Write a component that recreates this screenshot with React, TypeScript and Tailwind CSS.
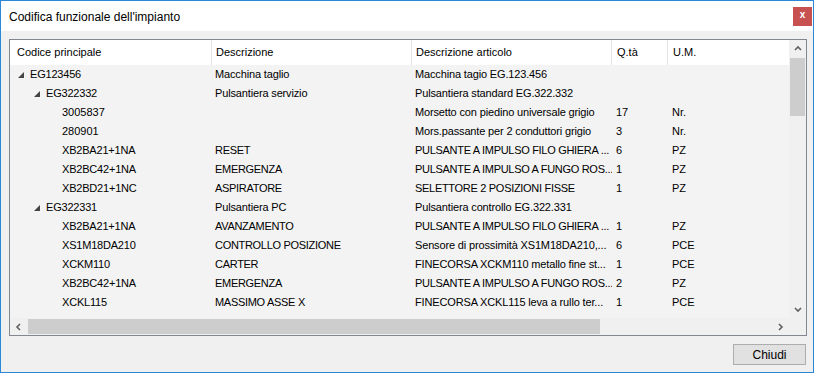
import React from "react";

type Row = {
  level: number;
  expanded?: boolean;
  code: string;
  desc: string;
  article: string;
  qty: string;
  um: string;
};

const rows: Row[] = [
  { level: 0, expanded: true, code: "EG123456", desc: "Macchina taglio", article: "Macchina tagio EG.123.456", qty: "", um: "" },
  { level: 1, expanded: true, code: "EG322332", desc: "Pulsantiera servizio", article: "Pulsantiera standard EG.322.332", qty: "", um: "" },
  { level: 2, code: "3005837", desc: "", article: "Morsetto con piedino universale grigio", qty: "17", um: "Nr." },
  { level: 2, code: "280901", desc: "", article: "Mors.passante per 2 conduttori grigio", qty: "3", um: "Nr." },
  { level: 2, code: "XB2BA21+1NA", desc: "RESET", article: "PULSANTE A IMPULSO FILO GHIERA ...", qty: "6", um: "PZ" },
  { level: 2, code: "XB2BC42+1NA", desc: "EMERGENZA", article: "PULSANTE A IMPULSO A FUNGO ROS...", qty: "1", um: "PZ" },
  { level: 2, code: "XB2BD21+1NC", desc: "ASPIRATORE", article: "SELETTORE 2 POSIZIONI FISSE", qty: "1", um: "PZ" },
  { level: 1, expanded: true, code: "EG322331", desc: "Pulsantiera PC", article: "Pulsantiera controllo EG.322.331", qty: "", um: "" },
  { level: 2, code: "XB2BA21+1NA", desc: "AVANZAMENTO", article: "PULSANTE A IMPULSO FILO GHIERA ...", qty: "1", um: "PZ" },
  { level: 2, code: "XS1M18DA210", desc: "CONTROLLO POSIZIONE", article: "Sensore di prossimità XS1M18DA210,...", qty: "6", um: "PCE" },
  { level: 2, code: "XCKM110", desc: "CARTER", article: "FINECORSA XCKM110 metallo fine st...", qty: "1", um: "PCE" },
  { level: 2, code: "XB2BC42+1NA", desc: "EMERGENZA", article: "PULSANTE A IMPULSO A FUNGO ROS...", qty: "2", um: "PZ" },
  { level: 2, code: "XCKL115", desc: "MASSIMO ASSE X", article: "FINECORSA XCKL115 leva a rullo ter...", qty: "1", um: "PCE" },
  { level: 2, code: "", desc: "", article: "", qty: "", um: "" },
];

const indent = ["pl-[8px]", "pl-[24px]", "pl-[52px]"];

// Arial caps run wider than the original Tahoma: tighten mostly-uppercase strings
const isCaps = (s: string) => {
  const letters = s.replace(/[^A-Za-z]/g, "");
  if (!letters) return false;
  const up = letters.replace(/[^A-Z]/g, "").length;
  return up / letters.length > 0.6;
};

const Cell = ({ text, className }: { text: string; className: string }) => (
  <div className={`${className} overflow-hidden ${isCaps(text) ? "tracking-[-0.3px]" : "tracking-[-0.15px]"}`}>
    {text}
  </div>
);

const Expander = () => (
  <svg width="6" height="6" viewBox="0 0 6 6" className="mr-[6px] shrink-0">
    <polygon points="6,0 6,6 0,6" fill="#444" />
  </svg>
);

const Chevron = ({ dir }: { dir: "up" | "down" | "left" | "right" }) => {
  const pts = {
    up: "1,5 4,2 7,5",
    down: "1,2 4,5 7,2",
    left: "5,1 2,4 5,7",
    right: "2,1 5,4 2,7",
  }[dir];
  return (
    <svg width="8" height="8" viewBox="0 0 8 8">
      <polyline points={pts} fill="none" stroke="#606060" strokeWidth="1.6" />
    </svg>
  );
};

export default function App() {
  return (
    <div className="w-[814px] h-[373px] border border-[#2b88d8] bg-[#f0f0f0] flex flex-col font-['Liberation_Sans',Arial,sans-serif] text-black">
      {/* Title bar */}
      <div className="h-[30px] bg-white flex items-center justify-between pl-2 pr-[1px]">
        <span className="text-[12px] pt-[1px]">Codifica funzionale dell'impianto</span>
        <div className="w-[19px] h-[19px] bg-[#c75050] flex items-center justify-center text-white text-[10px] font-bold leading-none pb-[2px]">
          x
        </div>
      </div>

      {/* Content */}
      <div className="flex-1 flex flex-col pl-2 pr-[6px] pt-2">
        <div className="h-[297px] border border-[#828790] grid grid-cols-[1fr_17px] grid-rows-[1fr_17px] text-[11px]">
          {/* Table */}
          <div className="overflow-hidden bg-[#f3f3f3] flex flex-col">
            <div className="h-[25px] bg-white flex items-stretch shrink-0">
              <div className="w-[202px] border-r border-[#e5e5e5] pl-[7px] flex items-center">Codice principale</div>
              <div className="w-[200px] border-r border-[#e5e5e5] pl-[4px] flex items-center">Descrizione</div>
              <div className="w-[200px] border-r border-[#e5e5e5] pl-[4px] flex items-center">Descrizione articolo</div>
              <div className="w-[56px] border-r border-[#e5e5e5] pl-[5px] flex items-center">Q.tà</div>
              <div className="w-[120px] pl-[5px] flex items-center">U.M.</div>
            </div>
            {rows.map((r, i) => (
              <div key={i} className="h-[19px] flex items-center shrink-0 whitespace-nowrap">
                <div className={`w-[202px] flex items-center ${indent[r.level]}`}>
                  {r.expanded && <Expander />}
                  <span className={isCaps(r.code) ? "tracking-[-0.2px]" : ""}>{r.code}</span>
                </div>
                <Cell text={r.desc} className="w-[200px] pl-[3px]" />
                <Cell text={r.article} className="w-[200px] pl-[3px]" />
                <div className="w-[56px] pl-[4px]">{r.qty}</div>
                <div className="w-[120px] pl-[4px]">{r.um}</div>
              </div>
            ))}
          </div>

          {/* Vertical scrollbar */}
          <div className="bg-[#f0f0f0] flex flex-col items-center">
            <div className="h-[17px] w-full flex items-center justify-center">
              <Chevron dir="up" />
            </div>
            <div className="mt-[1px] w-[15px] h-[58px] bg-[#cdcdcd]" />
            <div className="flex-1" />
            <div className="h-[17px] w-full flex items-center justify-center">
              <Chevron dir="down" />
            </div>
          </div>

          {/* Horizontal scrollbar */}
          <div className="bg-[#f0f0f0] flex items-center">
            <div className="w-[17px] h-full flex items-center justify-center">
              <Chevron dir="left" />
            </div>
            <div className="ml-[1px] w-[572px] h-[15px] bg-[#cdcdcd]" />
            <div className="flex-1" />
            <div className="w-[17px] h-full flex items-center justify-center">
              <Chevron dir="right" />
            </div>
          </div>

          <div className="bg-[#f0f0f0]" />
        </div>

        {/* Footer */}
        <div className="flex justify-end pt-2 pr-[1px]">
          <button className="w-[73px] h-[21px] bg-[#e1e1e1] border border-[#adadad] text-[12px] leading-none">
            Chiudi
          </button>
        </div>
      </div>
    </div>
  );
}
